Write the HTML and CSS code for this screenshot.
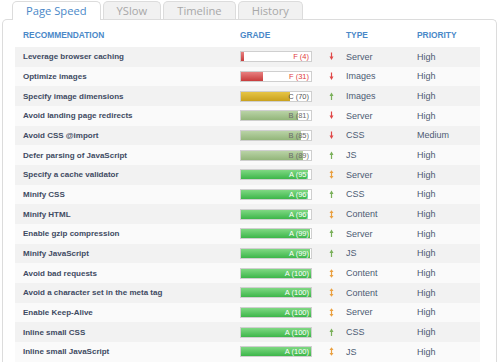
FILE: index.html
```html
<!DOCTYPE html>
<html>
<head>
<meta charset="utf-8">
<link rel="stylesheet" href="styles.css">
</head>
<body>
<div class="tabs">
  <div class="tab active">Page Speed</div>
  <div class="tab">YSlow</div>
  <div class="tab">Timeline</div>
  <div class="tab">History</div>
</div>
<div class="panel">
  <div class="row head">
    <div class="c-rec">RECOMMENDATION</div>
    <div class="c-grade">GRADE</div>
    <div class="c-arrow"></div>
    <div class="c-type">TYPE</div>
    <div class="c-pri">PRIORITY</div>
  </div>
  <div id="rows"></div>
</div>
<script src="app.js"></script>
</body>
</html>
```

FILE: styles.css
```css
* { box-sizing: border-box; }
body {
  margin: 0;
  background: #fff;
  font-family: "Liberation Sans", Arial, sans-serif;
  width: 500px;
  height: 363px;
  overflow: hidden;
}
.tabs {
  display: flex;
  gap: 2px;
  padding-left: 12px;
  padding-top: 1px;
  height: 19px;
}
.tab {
  height: 18px;
  padding: 0 13px;
  border: 1px solid #dcdcdc;
  border-bottom: none;
  border-radius: 5px 5px 0 0;
  background: #f1f1f1;
  color: #a8a8a8;
  font-family: "Open Sans", sans-serif;
  font-size: 11.2px;
  line-height: 17px;
}
.tab.active {
  background: #fff;
  color: #4a88c8;
  height: 19px;
  position: relative;
  z-index: 1;
}
.panel {
  margin-left: 2px;
  width: 495px;
  border: 1px solid #dcdcdc;
  border-bottom: none;
  border-radius: 5px 5px 0 0;
  padding: 0 16px 0 12px;
}
.row {
  display: grid;
  grid-template-columns: 225px 89px 17px 71px 1fr;
  align-items: center;
  height: 19.67px;
}
.row.head {
  height: 27px;
  padding-top: 3px;
  font-size: 8.4px;
  font-weight: bold;
  color: #4a88c8;
}
.c-rec { padding-left: 8px; }
.row.odd { background: #f2f2f2; }
.row.even { background: #fafafa; }
.rec {
  font-size: 8px;
  font-weight: bold;
  color: #3e4a62;
}
.type, .pri {
  font-size: 9px;
  color: #4d5a73;
}
.bar {
  position: relative;
  width: 72px;
  height: 11px;
  border: 1px solid #cfcfcf;
  background: #fff;
}
.fill { height: 100%; }
.fill.f { background: linear-gradient(#e88080, #c83c3c); }
.fill.c { background: linear-gradient(#e6c545, #c9a11e); }
.fill.b { background: linear-gradient(#b9d3a6, #93b67a); }
.fill.a { background: linear-gradient(#7fd883, #3db64a); }
.label {
  position: absolute;
  right: 2px;
  top: 0;
  line-height: 9px;
  font-size: 7.5px;
}
.label.f { color: #e03a3a; }
.label.c { color: #555; }
.label.b { color: #6a6a6a; }
.label.a { color: #fff; }
.arrow { display: block; }
```

FILE: app.js
```js
const data = [
  ["Leverage browser caching","F",4,"down","Server","High"],
  ["Optimize images","F",31,"down","Images","High"],
  ["Specify image dimensions","C",70,"up","Images","High"],
  ["Avoid landing page redirects","B",81,"down","Server","High"],
  ["Avoid CSS @import","B",85,"down","CSS","Medium"],
  ["Defer parsing of JavaScript","B",89,"up","JS","High"],
  ["Specify a cache validator","A",95,"both","Server","High"],
  ["Minify CSS","A",96,"up","CSS","High"],
  ["Minify HTML","A",96,"both","Content","High"],
  ["Enable gzip compression","A",99,"up","Server","High"],
  ["Minify JavaScript","A",99,"up","JS","High"],
  ["Avoid bad requests","A",100,"both","Content","High"],
  ["Avoid a character set in the meta tag","A",100,"both","Content","High"],
  ["Enable Keep-Alive","A",100,"both","Server","High"],
  ["Inline small CSS","A",100,"up","CSS","High"],
  ["Inline small JavaScript","A",100,"both","JS","High"]
];
const icons = {
  down: '<svg class="arrow" width="5" height="9" viewBox="0 0 5 9"><rect x="1.9" y="0.5" width="1.2" height="4.5" fill="#e04848"/><polygon points="0.5,4.5 4.5,4.5 2.5,8" fill="#e04848"/></svg>',
  up: '<svg class="arrow" width="5" height="9" viewBox="0 0 5 9"><polygon points="0.5,4 4.5,4 2.5,0.5" fill="#7ab05a"/><rect x="1.9" y="3.5" width="1.2" height="4.5" fill="#7ab05a"/></svg>',
  both: '<svg class="arrow" width="5" height="9" viewBox="0 0 5 9"><polygon points="0.5,3 4.5,3 2.5,0.3" fill="#eaa040"/><rect x="1.9" y="2.5" width="1.2" height="4" fill="#eaa040"/><polygon points="0.5,6 4.5,6 2.5,8.7" fill="#eaa040"/></svg>'
};
const rows = document.getElementById("rows");
data.forEach((d, i) => {
  const g = d[1].toLowerCase();
  const row = document.createElement("div");
  row.className = "row " + (i % 2 ? "even" : "odd");
  row.innerHTML =
    '<div class="c-rec rec">' + d[0] + '</div>' +
    '<div class="c-grade"><div class="bar"><div class="fill ' + g + '" style="width:' + d[2] + '%"></div><span class="label ' + g + '">' + d[1] + ' (' + d[2] + ')</span></div></div>' +
    '<div class="c-arrow">' + icons[d[3]] + '</div>' +
    '<div class="c-type type">' + d[4] + '</div>' +
    '<div class="c-pri pri">' + d[5] + '</div>';
  rows.appendChild(row);
});
```
